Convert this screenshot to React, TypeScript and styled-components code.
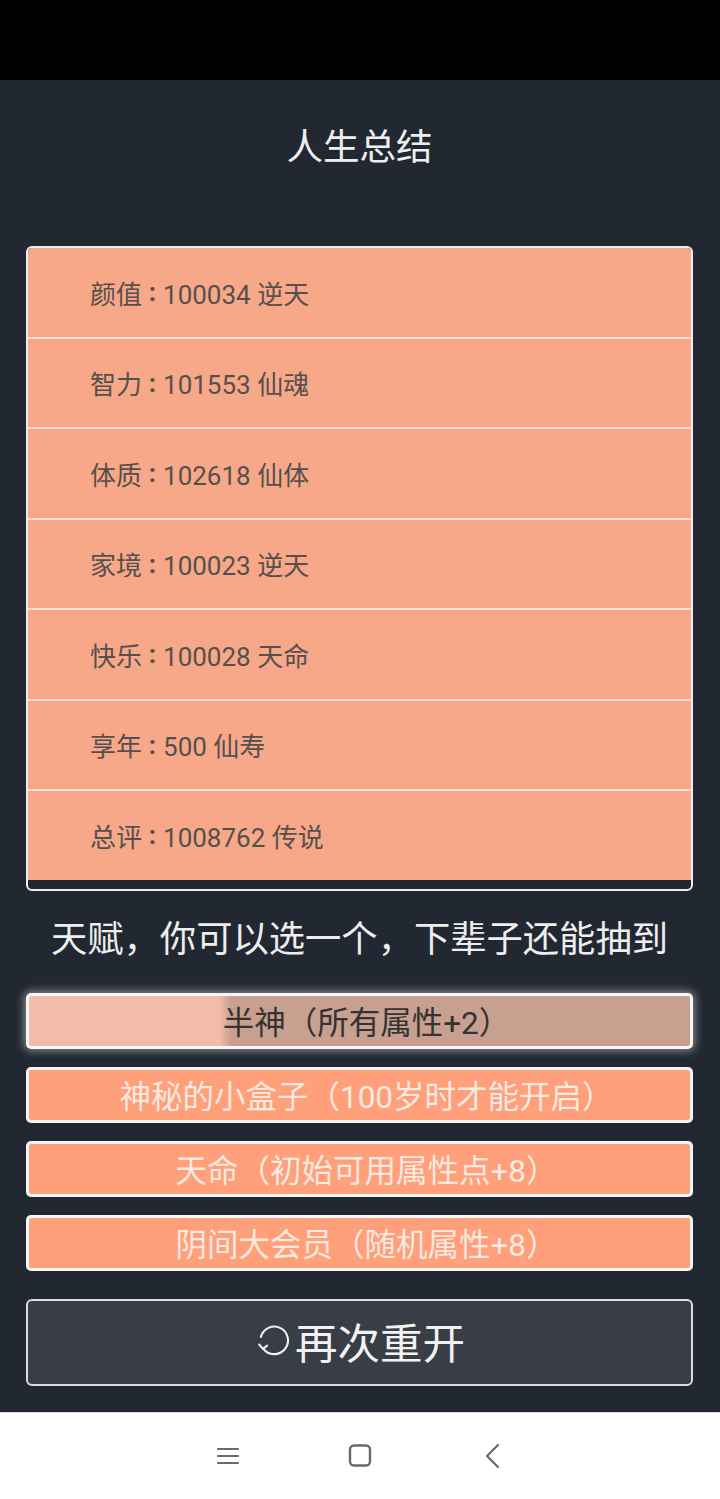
import React from "react";
import styled, { createGlobalStyle } from "styled-components";

const Global = createGlobalStyle`
  html, body { margin: 0; padding: 0; background: #222831; }
  body { font-family: Roboto, "Noto Sans CJK SC", sans-serif; }
  * { box-sizing: border-box; }
`;

const Screen = styled.div`
  width: 720px;
  height: 1499px;
  display: flex;
  flex-direction: column;
  background: #222831;
  overflow: hidden;
`;

const StatusBar = styled.div`
  height: 80px;
  flex: none;
  background: #000;
`;

const Main = styled.main`
  flex: 1;
  display: flex;
  flex-direction: column;
  padding: 43px 27px 0 26px;
`;

const Title = styled.h1`
  margin: 0;
  font-weight: 400;
  font-size: 36.5px;
  line-height: 50px;
  color: #eeeeee;
  text-align: center;
`;

const Card = styled.ul`
  list-style: none;
  margin: 73px 0 0;
  padding: 0 0 9.5px;
  border: 2px solid #eeeeee;
  border-radius: 6px;
  background: #222831;
  overflow: hidden;
`;

const Row = styled.li`
  height: 88.5px;
  display: flex;
  align-items: center;
  padding-left: 62px;
  background: #f7a889;
  color: #55504d;
  font-size: 26px;
  & + & { border-top: 2px solid #fbe2d8; height: 90.5px; }
`;

const Colon = styled.span`
  display: inline-block;
  width: 21px;
  text-align: center;
  font-family: Roboto, sans-serif;
  font-weight: 700;
`;

const Heading = styled.h2`
  margin: 24px 0 0;
  font-weight: 400;
  font-size: 36.3px;
  line-height: 50px;
  color: #eeeeee;
  text-align: center;
`;

const TalentList = styled.div`
  margin-top: 28px;
  display: flex;
  flex-direction: column;
  gap: 18px;
`;

const Talent = styled.div<{ $selected?: boolean }>`
  height: 56px;
  border: 3px solid #f6f6f6;
  border-radius: 5px;
  display: flex;
  align-items: center;
  justify-content: center;
  padding: 0 0 2px 14px;
  font-size: 31.5px;
  color: ${(p) => (p.$selected ? "#333" : "#f8e9e1")};
  background: ${(p) =>
    p.$selected
      ? "linear-gradient(to right, #f1bdaa 0, #f1bdaa 190px, #c9a08f 202px, #c9a08f 100%)"
      : "#ffa07a"};
  box-shadow: ${(p) => (p.$selected ? "0 0 9px 2px rgba(255,255,255,0.45)" : "none")};
`;

const Restart = styled.button`
  margin-top: 28px;
  height: 87px;
  width: 100%;
  border: 2px solid #dcdcdc;
  border-radius: 6px;
  background: #393e46;
  color: #f2f2f2;
  font-family: Roboto, "Noto Sans CJK SC", sans-serif;
  font-size: 42.5px;
  display: flex;
  align-items: center;
  justify-content: center;
  gap: 2px;
  padding: 0 0 5px;
`;

const NavBar = styled.nav`
  height: 87px;
  flex: none;
  background: #ffffff;
  border-top: 1px solid #d8dadd;
  display: flex;
  align-items: center;
  justify-content: center;
  gap: 98px;
`;

const NavIcon = styled.svg`
  width: 34px;
  height: 34px;
  display: block;
`;

const rows: [string, string][] = [
  ["颜值", "100034 逆天"],
  ["智力", "101553 仙魂"],
  ["体质", "102618 仙体"],
  ["家境", "100023 逆天"],
  ["快乐", "100028 天命"],
  ["享年", "500 仙寿"],
  ["总评", "1008762 传说"],
];

const talents = [
  "半神（所有属性+2）",
  "神秘的小盒子（100岁时才能开启）",
  "天命（初始可用属性点+8）",
  "阴间大会员（随机属性+8）",
];

export default function App() {
  return (
    <Screen>
      <Global />
      <StatusBar />
      <Main>
        <Title>人生总结</Title>
        <Card>
          {rows.map(([label, value]) => (
            <Row key={label}>
              {label}
              <Colon>:</Colon>
              {value}
            </Row>
          ))}
        </Card>
        <Heading>天赋，你可以选一个，下辈子还能抽到</Heading>
        <TalentList>
          {talents.map((t, i) => (
            <Talent key={t} $selected={i === 0}>
              {t}
            </Talent>
          ))}
        </TalentList>
        <Restart>
          <svg width="39" height="39" viewBox="0 0 34 34" fill="none" stroke="#f2f2f2" strokeWidth="1.8" strokeLinecap="round" strokeLinejoin="round">
            <path d="M6 14 A12 12 0 1 1 8 24" />
            <path d="M4.5 20.5 L7.8 24.3 L11.5 21.5" />
          </svg>
          <span>再次重开</span>
        </Restart>
      </Main>
      <NavBar>
        <NavIcon viewBox="0 0 34 34" fill="none" stroke="#6a6a6a" strokeWidth="2.2" strokeLinecap="round">
          <path d="M7 10 H27 M7 17 H27 M7 24 H27" />
        </NavIcon>
        <NavIcon viewBox="0 0 34 34" fill="none" stroke="#6a6a6a" strokeWidth="2.4">
          <rect x="7" y="6.5" width="20" height="20" rx="4" />
        </NavIcon>
        <NavIcon viewBox="0 0 34 34" fill="none" stroke="#6a6a6a" strokeWidth="2.2" strokeLinecap="round" strokeLinejoin="round">
          <path d="M23 6 L12 17 L23 28" />
        </NavIcon>
      </NavBar>
    </Screen>
  );
}
